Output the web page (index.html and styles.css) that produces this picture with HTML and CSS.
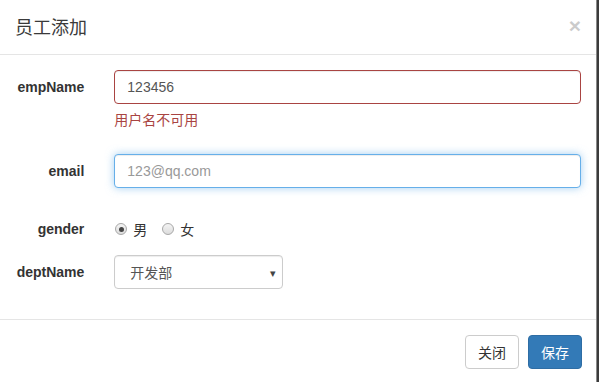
FILE: index.html
```html
<!DOCTYPE html>
<html lang="zh">
<head>
<meta charset="utf-8">
<title>员工添加</title>
<link rel="stylesheet" href="styles.css">
</head>
<body>
<div class="modal">
  <div class="modal-header">
    <h4 class="modal-title">员工添加</h4>
    <span class="close">×</span>
  </div>
  <div class="modal-body">
    <div class="form-group has-error">
      <label class="control-label">empName</label>
      <div class="control-col">
        <div class="form-control error">123456</div>
        <span class="help-block">用户名不可用</span>
      </div>
    </div>
    <div class="form-group">
      <label class="control-label">email</label>
      <div class="control-col">
        <div class="form-control focus placeholder">123@qq.com</div>
        <span class="help-block empty"></span>
      </div>
    </div>
    <div class="form-group gender-group">
      <label class="control-label">gender</label>
      <div class="control-col radios">
        <span class="radio-inline"><span class="radio checked"></span>男</span>
        <span class="radio-inline"><span class="radio"></span>女</span>
      </div>
    </div>
    <div class="form-group">
      <label class="control-label">deptName</label>
      <div class="control-col">
        <div class="select">开发部<span class="caret">▾</span></div>
      </div>
    </div>
  </div>
  <div class="modal-footer">
    <button class="btn btn-default">关闭</button>
    <button class="btn btn-primary">保存</button>
  </div>
</div>
</body>
</html>
```

FILE: styles.css
```css
* { box-sizing: border-box; }
html, body { margin: 0; padding: 0; }
body {
  background: #3b3b3b;
  font-family: "Liberation Sans", Arial, "Noto Sans CJK SC", sans-serif;
  font-size: 14px;
  line-height: 20px;
  color: #333;
  width: 599px;
  height: 382px;
  overflow: hidden;
}
.modal {
  width: 597px;
  height: 400px;
  background: #fff;
  border-right: 1px solid #8a8a8a;
}
.modal-header {
  display: flex;
  justify-content: space-between;
  align-items: flex-start;
  padding: 13px 15px 15px 15px;
  border-bottom: 1px solid #e5e5e5;
  height: 55px;
}
.modal-title {
  margin: 0;
  font-family: "Noto Sans CJK SC", sans-serif;
  font-size: 18px;
  line-height: 26px;
  font-weight: 400;
  color: #3a3a3a;
}
.close {
  font-size: 21px;
  font-weight: bold;
  line-height: 1;
  color: #000;
  opacity: 0.2;
  margin-top: 2px;
}
.modal-body {
  padding: 15px 0;
}
.form-group {
  display: grid;
  grid-template-columns: 16.6667% 83.3333%;
  margin-bottom: 15px;
}
.control-label {
  padding: 7px 15px 0 15px;
  text-align: right;
  font-weight: bold;
  color: #333;
}
.control-col {
  padding: 0 15px;
}
.form-control {
  height: 34px;
  padding: 6px 12px;
  font-size: 14px;
  line-height: 20px;
  color: #555;
  background: #fff;
  border: 1px solid #ccc;
  border-radius: 4px;
  box-shadow: inset 0 1px 1px rgba(0,0,0,.075);
}
.form-control.error {
  border-color: #a94442;
}
.form-control.focus {
  border-color: #66afe9;
  box-shadow: inset 0 1px 1px rgba(0,0,0,.075), 0 0 8px rgba(102,175,233,.6);
}
.placeholder { color: #999; }
.help-block {
  display: block;
  margin-top: 5px;
  margin-bottom: 10px;
  color: #a94442;
  font-family: "Noto Sans CJK SC", sans-serif;
}
.help-block.empty { height: 15px; margin: 0; }
.gender-group .control-label { padding-top: 1px; }
.gender-group { height: 22px; }
.radios {
  display: flex;
  align-items: center;
  padding-top: 0;
  height: 22px;
}
.radio-inline {
  display: inline-flex;
  align-items: center;
  font-family: "Noto Sans CJK SC", sans-serif;
  font-size: 14px;
  color: #333;
  margin-right: 15px;
}
.radio {
  width: 12px;
  height: 12px;
  border-radius: 50%;
  border: 1px solid #a8a8a8;
  background: linear-gradient(#f4f4f4, #dcdcdc);
  margin: 0 6px 0 0;
  position: relative;
}
.radio-inline:first-child .radio { margin-left: 1px; }
.radio.checked::after {
  content: "";
  position: absolute;
  left: 2.5px;
  top: 2.5px;
  width: 5px;
  height: 5px;
  border-radius: 50%;
  background: #444;
}
.select {
  width: 169px;
  height: 34px;
  padding: 6px 12px 6px 15px;
  border: 1px solid #ccc;
  border-radius: 4px;
  box-shadow: inset 0 1px 1px rgba(0,0,0,.075);
  color: #555;
  display: flex;
  justify-content: space-between;
  align-items: center;
  font-family: "Noto Sans CJK SC", sans-serif;
}
.caret {
  font-size: 11px;
  color: #444;
  margin-right: -6px;
}
.modal-footer {
  padding: 15px 14px 15px 15px;
  border-top: 1px solid #e5e5e5;
  display: flex;
  justify-content: flex-end;
  gap: 9px;
}
.btn {
  height: 34px;
  padding: 6px 12px;
  font-family: "Noto Sans CJK SC", sans-serif;
  font-size: 14px;
  line-height: 20px;
  border: 1px solid transparent;
  border-radius: 4px;
}
.btn-default {
  background: #fff;
  border-color: #ccc;
  color: #333;
}
.btn-primary {
  background: #337ab7;
  border-color: #2e6da4;
  color: #fff;
}
```
